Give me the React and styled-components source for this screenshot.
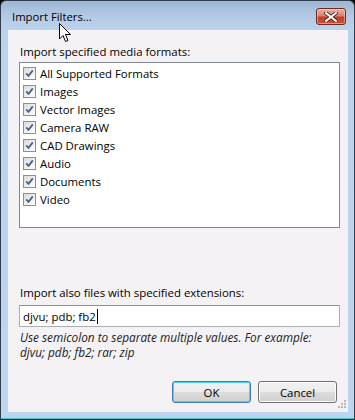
import React from "react";
import styled, { createGlobalStyle } from "styled-components";

const Global = createGlobalStyle`
  html, body { margin: 0; padding: 0; background: #000; }
  body { font-family: "Open Sans", "Liberation Sans", sans-serif; }
  #root { width: 355px; height: 420px; }
`;

const Window = styled.div`
  position: relative;
  box-sizing: border-box;
  width: 355px;
  height: 420px;
  border: 1px solid #2f3d4c;
  border-bottom-color: #1a2a33;
  border-radius: 6px 6px 0 0;
  background: linear-gradient(180deg, #9db6d4 0px, #b3c9e3 14px, #bcd3ee 30px, #bdd5f0 100%);
  display: flex;
  flex-direction: column;
  overflow: hidden;
`;

const TitleBar = styled.div`
  height: 29px;
  display: flex;
  align-items: center;
  padding: 0 8px 0 11px;
  flex-shrink: 0;
`;

const Title = styled.div`
  flex: 1;
  font-size: 11.3px;
  color: #000;
  padding-top: 2px;
`;

const CloseButton = styled.div`
  box-sizing: border-box;
  width: 30px;
  height: 17px;
  margin-top: 2px;
  border: 1px solid #6a2a22;
  border-radius: 3px;
  background: linear-gradient(180deg, #eab1a4 0%, #d7826f 45%, #c2402a 55%, #c8553c 100%);
  box-shadow: inset 0 0 0 1px rgba(255, 220, 210, 0.5);
  display: flex;
  align-items: center;
  justify-content: center;
`;

const Frame = styled.div`
  flex: 1;
  display: flex;
  flex-direction: column;
  padding: 0 6px 6px 7px;
  border-bottom: 1px solid #3cc6d8;
`;

const Client = styled.div`
  position: relative;
  flex: 1;
  background: #f5f2f5;
  padding: 14px 8px 0 11px;
  display: flex;
  flex-direction: column;
  color: #000;
  font-size: 11.4px;
`;

const Label = styled.div`
  height: 16px;
  line-height: 16px;
  padding-left: 1px;
  margin-top: ${(p) => p.$mt || 0}px;
`;

const ListBox = styled.div`
  box-sizing: border-box;
  margin-top: 2px;
  height: 166px;
  border: 1px solid #828790;
  background: #fff;
  padding: 1px 3px;
  display: flex;
  flex-direction: column;
`;

const Row = styled.div`
  height: 18px;
  display: flex;
  align-items: center;
  gap: 4px;
`;

const Box = styled.span`
  box-sizing: border-box;
  width: 13px;
  height: 13px;
  border: 1px solid #8e8f8f;
  background: linear-gradient(135deg, #dcdcdc 0%, #f4f4f4 70%, #fff 100%);
  display: flex;
  align-items: center;
  justify-content: center;
  margin-top: 1px;
`;

const Input = styled.div`
  box-sizing: border-box;
  margin-top: 4px;
  height: 22px;
  border: 1px solid #abadb3;
  border-top-color: #8e9298;
  background: #fff;
  display: flex;
  align-items: center;
  padding-left: 3px;
`;

const Caret = styled.span`
  display: inline-block;
  width: 1px;
  height: 15px;
  background: #000;
  margin-left: 1px;
`;

const Hint = styled.div`
  margin-top: 3px;
  font-style: italic;
  font-size: 11.8px;
  line-height: 15px;
  color: #222;
  padding-left: 1px;
`;

const Buttons = styled.div`
  margin-top: 21px;
  margin-right: 3px;
  display: flex;
  justify-content: flex-end;
  gap: 7px;
`;

const Button = styled.div`
  box-sizing: border-box;
  width: 79px;
  height: 22px;
  border: 1px solid ${(p) => (p.$default ? "#3c7fb1" : "#707070")};
  border-radius: 3px;
  background: linear-gradient(180deg, #f2f2f2 0%, #ebebeb 48%, #dddddd 52%, #cfcfcf 100%);
  box-shadow: inset 0 0 0 1px ${(p) => (p.$default ? "#48d2f8" : "#fcfcfc")};
  display: flex;
  align-items: center;
  justify-content: center;
`;

const Grip = styled.svg`
  position: absolute;
  right: 2px;
  bottom: 4px;
`;

const Cursor = styled.svg`
  position: absolute;
  left: 58px;
  top: 22px;
`;

const items = [
  "All Supported Formats",
  "Images",
  "Vector Images",
  "Camera RAW",
  "CAD Drawings",
  "Audio",
  "Documents",
  "Video",
];

const Check = () => (
  <svg width="9" height="9" viewBox="0 0 9 9">
    <path d="M1.2 4.4 L3.5 6.8 L7.8 1.4" fill="none" stroke="#4d6185" strokeWidth="1.8" />
  </svg>
);

export default function App() {
  return (
    <>
      <Global />
      <Window>
        <TitleBar>
          <Title>Import Filters...</Title>
          <CloseButton>
            <svg width="14" height="10" viewBox="0 0 14 10">
              <path d="M2 1 L12 9 M12 1 L2 9" stroke="#4a1d16" strokeWidth="3.6" strokeLinecap="square" />
              <path d="M2 1 L12 9 M12 1 L2 9" stroke="#fff" strokeWidth="2" strokeLinecap="square" />
            </svg>
          </CloseButton>
        </TitleBar>
        <Frame>
          <Client>
            <Label>Import specified media formats:</Label>
            <ListBox>
              {items.map((t) => (
                <Row key={t}>
                  <Box>
                    <Check />
                  </Box>
                  <span>{t}</span>
                </Row>
              ))}
            </ListBox>
            <Label $mt={57}>Import also files with specified extensions:</Label>
            <Input>
              djvu; pdb; fb2
              <Caret />
            </Input>
            <Hint>
              Use semicolon to separate multiple values. For example:
              <br />
              djvu; pdb; fb2; rar; zip
            </Hint>
            <Buttons>
              <Button $default>OK</Button>
              <Button>Cancel</Button>
            </Buttons>
            <Grip width="8" height="8" viewBox="0 0 8 8">
              {[[6, 0], [6, 3], [3, 3], [6, 6], [3, 6], [0, 6]].map(([x, y]) => (
                <rect key={`${x}-${y}`} x={x} y={y} width="2" height="2" fill="#b8b8b8" />
              ))}
            </Grip>
          </Client>
        </Frame>
        <Cursor width="13" height="20" viewBox="0 0 13 20">
          <path d="M0.5 0.5 L0.5 16 L4 12.5 L6.5 18.5 L9 17.5 L6.5 11.5 L11.5 11.5 Z" fill="#fff" stroke="#000" strokeWidth="1" strokeLinejoin="miter" />
        </Cursor>
      </Window>
    </>
  );
}
